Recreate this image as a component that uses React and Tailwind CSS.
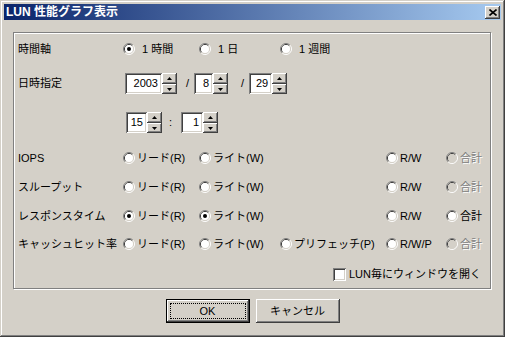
import React from "react";

const FONT = "font-['Liberation_Sans','Noto_Sans_CJK_JP',sans-serif]";
const RAISED =
  "shadow-[inset_-1px_-1px_0_#404040,inset_1px_1px_0_#fff,inset_-2px_-2px_0_#808080,inset_2px_2px_0_#d4d0c8]";
const SUNKEN =
  "shadow-[inset_1px_1px_0_#808080,inset_-1px_-1px_0_#fff,inset_2px_2px_0_#404040,inset_-2px_-2px_0_#d4d0c8]";

function Radio({ checked, disabled }) {
  return (
    <svg width="12" height="12" viewBox="0 0 12 12" className="shrink-0">
      <path d="M2.11 9.89A5.5 5.5 0 0 1 9.89 2.11" fill="none" stroke="#808080" />
      <path d="M9.89 2.11A5.5 5.5 0 0 1 2.11 9.89" fill="none" stroke="#ffffff" />
      <path d="M2.82 9.18A4.5 4.5 0 0 1 9.18 2.82" fill="none" stroke="#404040" />
      <path d="M9.18 2.82A4.5 4.5 0 0 1 2.82 9.18" fill="none" stroke="#d4d0c8" />
      <circle cx="6" cy="6" r="4" fill={disabled ? "#d4d0c8" : "#ffffff"} />
      {checked && <circle cx="6" cy="6" r="2" fill="#000000" />}
    </svg>
  );
}

function RadioItem({ label, checked, disabled, wide }) {
  return (
    <div className="flex items-center">
      <Radio checked={checked} disabled={disabled} />
      <span
        className={
          (wide ? "ml-[7px] " : "ml-[2px] ") +
          "whitespace-nowrap text-[11px] leading-none " +
          (disabled ? "text-[#808080] [text-shadow:1px_1px_0_#fff]" : "text-black")
        }
      >
        {label}
      </span>
    </div>
  );
}

function Arrow({ down }) {
  return (
    <svg width="5" height="3" viewBox="0 0 5 3">
      {down ? <path d="M0 0H5L2.5 3Z" fill="#000" /> : <path d="M2.5 0L5 3H0Z" fill="#000" />}
    </svg>
  );
}

function Spinner({ value, boxClass }) {
  return (
    <div className="flex h-[21px]">
      <div
        className={
          boxClass +
          " h-full bg-white flex items-center justify-end pr-[4px] text-[11px] leading-none text-black " +
          SUNKEN
        }
      >
        {value}
      </div>
      <div className="flex flex-col w-[15px] h-full">
        <div className={"h-[11px] bg-[#d4d0c8] flex items-center justify-center " + RAISED}>
          <Arrow />
        </div>
        <div className={"h-[10px] bg-[#d4d0c8] flex items-center justify-center " + RAISED}>
          <Arrow down />
        </div>
      </div>
    </div>
  );
}

function Row({ label, cells, className }) {
  return (
    <div
      className={
        "grid grid-cols-[109px_76px_81px_106px_60px_1fr] items-center h-[20px] " + (className || "")
      }
    >
      <div className="pl-[4px] text-[11px] leading-none whitespace-nowrap text-black">{label}</div>
      {cells.map((c, i) => (
        <div key={i}>{c}</div>
      ))}
    </div>
  );
}

export default function App() {
  return (
    <div className={"w-[508px] h-[341px] bg-white " + FONT}>
      <div
        className={
          "w-[505px] h-[337px] bg-[#d4d0c8] p-[4px] flex flex-col shadow-[inset_-1px_-1px_0_#404040,inset_1px_1px_0_#d4d0c8,inset_-2px_-2px_0_#808080,inset_2px_2px_0_#fff]"
        }
      >
        {/* Title bar */}
        <div className="h-[16px] bg-[linear-gradient(to_right,#0a246a,#a6caf0)] flex items-center justify-between">
          <span className="pl-[2px] text-white font-bold text-[12px] leading-none whitespace-nowrap">
            LUN 性能グラフ表示
          </span>
          <div
            className={
              "w-[15px] h-[13px] mr-[1px] bg-[#d4d0c8] flex items-center justify-center " + RAISED
            }
          >
            <svg width="8" height="7" viewBox="0 0 8 7">
              <path d="M0.5 0.5L7.5 6.5M7.5 0.5L0.5 6.5" stroke="#000" strokeWidth="1.6" />
            </svg>
          </div>
        </div>

        {/* Group box */}
        <div className="mt-[12px] ml-[9px] mr-[10px] h-[257px] border border-[#808080] shadow-[inset_1px_1px_0_#fff,1px_1px_0_#fff] flex flex-col">
          <Row
            className="mt-[6px]"
            label="時間軸"
            cells={[
              <RadioItem label="1 時間" checked wide />,
              <RadioItem label="1 日" wide />,
              <RadioItem label="1 週間" wide />,
            ]}
          />

          <div className="mt-[14px] flex items-center h-[21px]">
            <div className="w-[111px] pl-[4px] text-[11px] leading-none text-black">日時指定</div>
            <Spinner value="2003" boxClass="w-[37px]" />
            <span className="ml-[9px] mr-[5px] text-[11px] text-black">/</span>
            <Spinner value="8" boxClass="w-[19px]" />
            <span className="ml-[13px] mr-[5px] text-[11px] text-black">/</span>
            <Spinner value="29" boxClass="w-[23px]" />
          </div>

          <div className="mt-[18px] flex items-center h-[21px]">
            <div className="w-[112px]" />
            <Spinner value="15" boxClass="w-[21px]" />
            <span className="ml-[7px] mr-[9px] text-[11px] text-black">:</span>
            <Spinner value="1" boxClass="w-[22px]" />
          </div>

          <Row
            className="mt-[15px]"
            label="IOPS"
            cells={[
              <RadioItem label="リード(R)" />,
              <RadioItem label="ライト(W)" />,
              <span />,
              <RadioItem label="R/W" />,
              <RadioItem label="合計" disabled />,
            ]}
          />
          <Row
            className="mt-[9px]"
            label="スループット"
            cells={[
              <RadioItem label="リード(R)" />,
              <RadioItem label="ライト(W)" />,
              <span />,
              <RadioItem label="R/W" />,
              <RadioItem label="合計" disabled />,
            ]}
          />
          <Row
            className="mt-[9px]"
            label="レスポンスタイム"
            cells={[
              <RadioItem label="リード(R)" checked />,
              <RadioItem label="ライト(W)" checked />,
              <span />,
              <RadioItem label="R/W" />,
              <RadioItem label="合計" />,
            ]}
          />
          <Row
            className="mt-[8px]"
            label="キャッシュヒット率"
            cells={[
              <RadioItem label="リード(R)" />,
              <RadioItem label="ライト(W)" />,
              <RadioItem label="プリフェッチ(P)" />,
              <RadioItem label="R/W/P" />,
              <RadioItem label="合計" disabled />,
            ]}
          />

          <div className="mt-[10px] h-[20px] flex items-center justify-end pr-[9px]">
            <div className={"w-[13px] h-[13px] bg-white " + SUNKEN} />
            <span className="ml-[3px] text-[11px] leading-none text-black whitespace-nowrap">
              LUN毎にウィンドウを開く
            </span>
          </div>
        </div>

        {/* Buttons */}
        <div className="mt-[10px] flex justify-center gap-[6px]">
          <div className="w-[84px] h-[24px] border border-black">
            <div className={"w-full h-full bg-[#d4d0c8] p-[3px] " + RAISED}>
              <div className="w-full h-full border border-dotted border-black flex items-center justify-center text-[11px] leading-none text-black">
                OK
              </div>
            </div>
          </div>
          <div
            className={
              "w-[84px] h-[24px] bg-[#d4d0c8] flex items-center justify-center text-[11px] leading-none text-black " +
              RAISED
            }
          >
            キャンセル
          </div>
        </div>
      </div>
    </div>
  );
}
